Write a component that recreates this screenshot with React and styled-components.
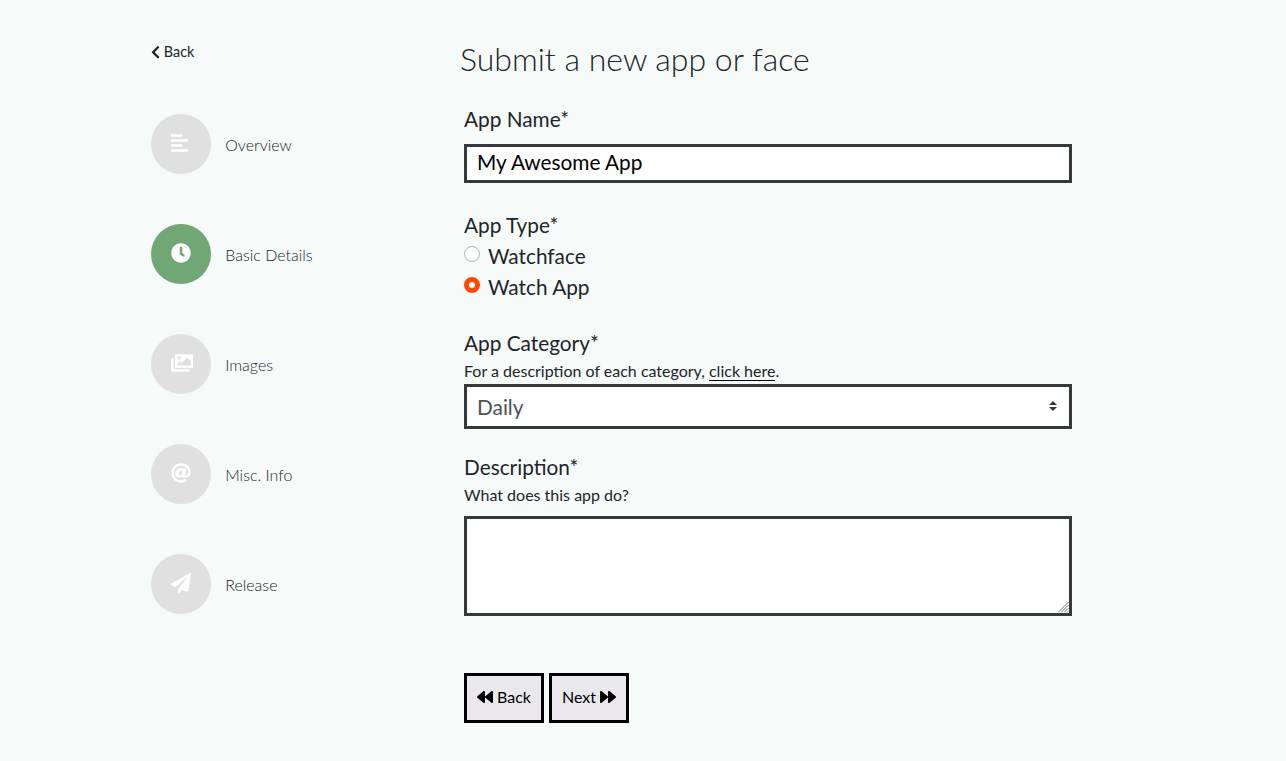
import React from "react";
import styled, { createGlobalStyle } from "styled-components";
import {
  FaAlignLeft,
  FaAt,
  FaBackward,
  FaChevronLeft,
  FaClock,
  FaForward,
  FaImages,
  FaPaperPlane,
} from "react-icons/fa";

const GlobalStyle = createGlobalStyle`
  *, *::before, *::after { box-sizing: border-box; }
  body {
    margin: 0;
    background: #f6faf9;
    color: #212529;
    font-family: Lato, "Liberation Sans", sans-serif;
    font-size: 16px;
    line-height: 24px;
  }
`;

const Page = styled.div`
  display: flex;
  min-height: 761px;
  padding-left: 151px;
`;

const Sidebar = styled.nav`
  width: 309px;
  padding-top: 40px;
`;

const BackLink = styled.a`
  display: flex;
  align-items: center;
  gap: 3.8px;
  height: 24px;
  margin-bottom: 50px;
  font-size: 14.4px;
  svg { width: 9px; height: 14.4px; }
`;

const Step = styled.div`
  display: flex;
  align-items: center;
  gap: 14.2px;
  height: 60px;
  margin-bottom: 50px;
`;

const StepIcon = styled.span`
  display: flex;
  align-items: center;
  width: 60px;
  height: 60px;
  padding: 0 0 1.6px 19.8px;
  border-radius: 50%;
  background: ${({ $active }) => ($active ? "#71a775" : "#e0e0e0")};
  color: #fff;
  svg {
    flex: none;
    width: ${({ $glyphWidth }) => $glyphWidth}px;
    height: 20px;
  }
`;

const StepLabel = styled.span`
  padding-top: 2px;
  font-weight: 300;
`;

const Main = styled.main`
  width: 612px;
`;

const Title = styled.h1`
  margin: 0;
  padding-top: 40px;
  height: 104px;
  font-size: 32px;
  font-weight: 300;
  line-height: 38px;
`;

const Form = styled.form`
  padding-left: 4px;
`;

const Field = styled.section`
  display: flex;
  flex-direction: column;
  height: ${({ $height }) => $height}px;
`;

const Label = styled.label`
  height: 31px;
  font-size: 20.8px;
  line-height: 29px;
`;

const Hint = styled.p`
  margin: 0;
  height: ${({ $height }) => $height}px;
`;

const HintLink = styled.a`
  display: inline-block;
  height: 22px;
  border-bottom: 1px solid #000;
`;

const Input = styled.input`
  width: 608px;
  height: 39px;
  margin-top: 9px;
  padding: 0 10px 4px;
  border: 3px solid #373a3c;
  border-radius: 0;
  outline: none;
  background: #fff;
  color: #000;
  font: 20.8px Lato, sans-serif;
`;

const Radio = styled.label`
  display: flex;
  align-items: flex-start;
  gap: 8px;
  height: 31px;
  font-size: 20.8px;
  line-height: 29px;
`;

const RadioMark = styled.span`
  width: 16px;
  height: 16px;
  margin-top: 5px;
  border: ${({ $checked }) => ($checked ? "5px solid #ff4700" : "1px solid #adb5bd")};
  border-radius: 50%;
  background: #fff;
`;

const Select = styled.div`
  display: flex;
  align-items: center;
  justify-content: space-between;
  width: 608px;
  height: 45px;
  padding: 1px 12px 0 10px;
  border: 3px solid #373a3c;
  background: #fff;
  color: #495057;
  font-size: 20.8px;
  svg { width: 8px; height: 10px; margin-bottom: 2px; }
`;

const TextAreaFrame = styled.div`
  position: relative;
  width: 608px;
  height: 100px;
`;

const TextArea = styled.textarea`
  display: block;
  width: 100%;
  height: 100%;
  border: 3px solid #373a3c;
  background: #fff;
  outline: none;
  resize: none;
`;

const Grip = styled.svg`
  position: absolute;
  right: 3px;
  bottom: 3px;
  width: 11px;
  height: 11px;
  pointer-events: none;
`;

const Actions = styled.div`
  display: flex;
  gap: 5px;
`;

const Button = styled.button`
  display: flex;
  align-items: center;
  justify-content: center;
  gap: 4px;
  width: 80px;
  height: 50px;
  padding: 0 0 3px;
  border: 3px solid #000;
  background: #eae8ed;
  color: #000;
  font: 16px Lato, sans-serif;
  svg { width: 16px; height: 16px; flex: none; margin-top: 1px; }
`;

const steps = [
  { label: "Overview", Icon: FaAlignLeft, glyphWidth: 17.5 },
  { label: "Basic Details", Icon: FaClock, glyphWidth: 20, active: true },
  { label: "Images", Icon: FaImages, glyphWidth: 22.5 },
  { label: "Misc. Info", Icon: FaAt, glyphWidth: 20 },
  { label: "Release", Icon: FaPaperPlane, glyphWidth: 20 },
];

export default function App() {
  return (
    <>
      <GlobalStyle />
      <Page>
        <Sidebar>
          <BackLink><FaChevronLeft />Back</BackLink>
          {steps.map(({ label, Icon, glyphWidth, active }) => (
            <Step key={label}>
              <StepIcon $active={active} $glyphWidth={glyphWidth}><Icon /></StepIcon>
              <StepLabel>{label}</StepLabel>
            </Step>
          ))}
        </Sidebar>
        <Main>
          <Title>Submit a new app or face</Title>
          <Form>
            <Field $height={106}>
              <Label>App Name*</Label>
              <Input defaultValue="My Awesome App" />
            </Field>
            <Field $height={118}>
              <Label>App Type*</Label>
              <Radio><RadioMark />Watchface</Radio>
              <Radio><RadioMark $checked />Watch App</Radio>
            </Field>
            <Field $height={124}>
              <Label>App Category*</Label>
              <Hint $height={25}>
                For a description of each category, <HintLink>click here</HintLink>.
              </Hint>
              <Select>
                Daily
                <svg viewBox="0 0 4 5"><path fill="#343a40" d="M2 0L0 2h4zm0 5L0 3h4z" /></svg>
              </Select>
            </Field>
            <Field $height={221}>
              <Label>Description*</Label>
              <Hint $height={33}>What does this app do?</Hint>
              <TextAreaFrame>
                <TextArea />
                <Grip viewBox="0 0 11 11" stroke="#777" strokeWidth="1">
                  <path d="M0 10.5L10.5 0M3 10.5L10.5 3M6 10.5L10.5 6M9 10.5L10.5 9" />
                </Grip>
              </TextAreaFrame>
            </Field>
            <Actions>
              <Button type="button"><FaBackward />Back</Button>
              <Button type="button">Next<FaForward /></Button>
            </Actions>
          </Form>
        </Main>
      </Page>
    </>
  );
}
